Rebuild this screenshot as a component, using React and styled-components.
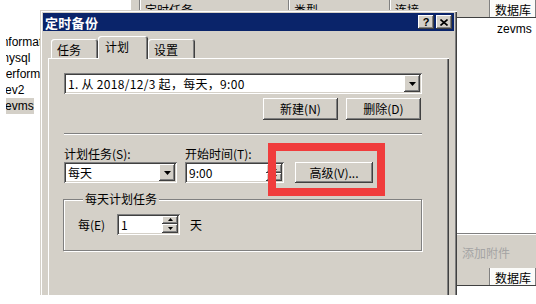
import styled, { createGlobalStyle } from 'styled-components';

const FACE = '#d4d0c8';
const SHADOW = '#808080';
const DARK = '#404040';

const raised = `
  background: ${FACE};
  box-shadow: inset -1px -1px ${DARK}, inset 1px 1px #fff, inset -2px -2px ${SHADOW}, inset 2px 2px ${FACE};
`;

const sunken = `
  background: #fff;
  box-shadow: inset 1px 1px ${SHADOW}, inset -1px -1px #fff, inset 2px 2px ${DARK}, inset -2px -2px ${FACE};
`;

const GlobalStyle = createGlobalStyle`
  * { box-sizing: border-box; }
  html, body { margin: 0; padding: 0; background: #fff; }
  body {
    overflow: hidden;
    font-family: "Noto Sans CJK SC", "Liberation Sans", sans-serif;
    font-size: 12px;
    color: #000;
  }
`;

const Screen = styled.div`
  position: relative;
  width: 536px;
  height: 304px;
  overflow: hidden;
  display: grid;
  grid-template-columns: 130px 1fr;
`;

/* ---------- background application ---------- */

const DbList = styled.ul`
  list-style: none;
  margin: 34px 0 0 6px;
  padding: 0;
  overflow: hidden;
  font: 12px "Liberation Sans", sans-serif;
`;

const DbItem = styled.li`
  height: 16px;
  line-height: 16px;
  white-space: nowrap;
  text-indent: -7px;
  background: ${p => (p.$selected ? `linear-gradient(${FACE}, ${FACE}) 0 0 / 28px 100% no-repeat` : 'none')};
`;

const MainArea = styled.div`
  display: flex;
  flex-direction: column;
  min-width: 0;
`;

const columns = '10px 149px 101px 100px 1fr';

const HeaderRow = styled.div`
  display: grid;
  grid-template-columns: ${columns};
  height: 18px;
  border-bottom: 1px solid ${DARK};
  border-top: ${p => (p.$boxed ? `1px solid ${DARK}` : 'none')};
`;

const HeaderCell = styled.div`
  background: ${p => (p.$light ? '#fbfbf9' : FACE)};
  border-right: 1px solid ${SHADOW};
  box-shadow: inset 1px 0 #fff;
  padding: 3px 0 0 5px;
  white-space: nowrap;
  overflow: hidden;
  line-height: 14px;
`;

const Grid = styled.div`
  flex: 0 0 215px;
  background: #fff;
`;

const DataRow = styled.div`
  display: grid;
  grid-template-columns: ${columns};
  margin-top: 4px;
  height: 16px;
  font: 12px "Liberation Sans", sans-serif;
`;

const DataCell = styled.div`
  padding-left: 7px;
  white-space: nowrap;
  overflow: hidden;
`;

const Toolbar = styled.div`
  flex: 0 0 35px;
  background: ${FACE};
  border-top: 1px solid ${SHADOW};
  box-shadow: inset 0 1px #fff;
  display: flex;
  align-items: center;
  justify-content: flex-end;
  padding: 2px 26px 0 0;
`;

const ToolItem = styled.span`
  color: #a4a4a4;
  font-size: 12px;
`;

/* ---------- dialog window ---------- */

const Dialog = styled.div`
  position: absolute;
  left: 40px;
  top: 10px;
  width: 417px;
  height: 285px;
  background: ${FACE};
  box-shadow: inset 1px 1px ${FACE}, inset 2px 2px #fff, inset -1px 0 ${DARK}, inset -2px 0 ${SHADOW};
  padding: 3px 3px 0;
  display: flex;
  flex-direction: column;
`;

const TitleBar = styled.div`
  height: 18px;
  background: #0a246a;
  display: flex;
  align-items: center;
  padding: 0 2px 0 2px;
`;

const Title = styled.span`
  flex: 1;
  color: #fff;
  font-weight: bold;
  font-size: 13px;
  letter-spacing: 0.3px;
`;

const CaptionButton = styled.span`
  ${raised}
  width: 16px;
  height: 14px;
  margin-left: 2px;
  display: flex;
  align-items: center;
  justify-content: center;
  font: bold 11px "Liberation Sans", sans-serif;
  line-height: 14px;
`;

const TabStrip = styled.div`
  display: flex;
  align-items: flex-end;
  height: 22px;
  margin-top: 5px;
  padding-left: 8px;
  position: relative;
  z-index: 1;
`;

const Tab = styled.div`
  width: ${p => p.$w}px;
  height: ${p => (p.$active ? 23 : 19)}px;
  margin-bottom: ${p => (p.$active ? -1 : 0)}px;
  background: ${FACE};
  border-radius: 3px 3px 0 0;
  box-shadow: inset 1px 1px #fff, inset -1px 0 ${DARK}, inset -2px 0 ${SHADOW};
  padding: ${p => (p.$active ? '4px 0 0 7px' : '4px 0 0 6px')};
  line-height: 14px;
`;

const TabPanel = styled.div`
  flex: 1;
  margin: 0 5px;
  background: ${FACE};
  box-shadow: inset 1px 1px #fff, inset -1px 0 ${DARK}, inset -2px 0 ${SHADOW};
  padding: 15px 0 0 16px;
`;

const Content = styled.div`
  width: 358px;
  display: flex;
  flex-direction: column;
`;

const Combo = styled.div`
  ${sunken}
  width: ${p => p.$w}px;
  height: 21px;
  display: flex;
  align-items: stretch;
  padding: 2px;
`;

const FieldText = styled.span`
  flex: 1;
  padding-left: 2px;
  line-height: 17px;
  white-space: nowrap;
  overflow: hidden;
  letter-spacing: ${p => p.$spacing || 0}px;
`;

const DropButton = styled.span`
  ${raised}
  width: 16px;
  display: flex;
  align-items: center;
  justify-content: center;
`;

const Spinner = styled.span`
  width: 16px;
  display: flex;
  flex-direction: column;
`;

const SpinHalf = styled.span`
  ${raised}
  flex: 1;
  display: flex;
  align-items: center;
  justify-content: center;
`;

const ButtonRow = styled.div`
  display: flex;
  justify-content: flex-end;
  gap: 8px;
  margin-top: 4px;
  padding-right: 1px;
`;

const PushButton = styled.span`
  ${raised}
  width: ${p => p.$w}px;
  height: 22px;
  display: flex;
  align-items: center;
  justify-content: center;
  white-space: nowrap;
  padding-bottom: 1px;
`;

const Separator = styled.div`
  height: 2px;
  margin-top: 13px;
  border-top: 1px solid ${SHADOW};
  border-bottom: 1px solid #fff;
`;

const ScheduleGrid = styled.div`
  display: grid;
  grid-template-columns: 113px 99px 78px;
  column-gap: 8px;
  row-gap: 1px;
  align-items: end;
  margin-top: 12px;
`;

const Label = styled.span`
  line-height: 14px;
  white-space: nowrap;
`;

const AdvancedButton = styled(PushButton)`
  height: 21px;
  margin-left: 3px;
`;

const GroupBox = styled.fieldset`
  margin: 9px 0 0 -1px;
  width: 359px;
  min-width: 0;
  padding: 0 0 16px 14px;
  border: 1px solid ${SHADOW};
  box-shadow: inset 1px 1px #fff, 1px 1px #fff;
`;

const GroupLegend = styled.legend`
  margin-left: 5px;
  padding: 0 2px;
  background: ${FACE};
  line-height: 14px;
`;

const GroupRow = styled.div`
  display: flex;
  align-items: center;
  height: 20px;
  margin-top: 8px;
`;

const RowLabel = styled.span`
  width: 39px;
  white-space: nowrap;
`;

const Unit = styled.span`
  margin-left: 10px;
`;

const Callout = styled.div`
  position: absolute;
  left: 268px;
  top: 143px;
  width: 117px;
  height: 53px;
  border: 8px solid #f03c3c;
`;

const Arrow = ({ up }) => (
  <svg width="7" height="4" viewBox="0 0 7 4">
    <path d={up ? 'M3.5 0L7 4H0z' : 'M0 0h7L3.5 4z'} fill="#000" />
  </svg>
);

const SmallArrow = ({ up }) => (
  <svg width="5" height="3" viewBox="0 0 5 3">
    <path d={up ? 'M2.5 0L5 3H0z' : 'M0 0h5L2.5 3z'} fill="#000" />
  </svg>
);

const dbNames = ['information_schema', 'mysql', 'performance_schema', 'zev2', 'zevms'];

export default function App() {
  return (
    <>
      <GlobalStyle />
      <Screen>
        <DbList>
          {dbNames.map(name => (
            <DbItem key={name} $selected={name === 'zevms'}>{name}</DbItem>
          ))}
        </DbList>

        <MainArea>
          <HeaderRow>
            <HeaderCell />
            <HeaderCell>定时任务</HeaderCell>
            <HeaderCell>类型</HeaderCell>
            <HeaderCell>连接</HeaderCell>
            <HeaderCell $light>数据库</HeaderCell>
          </HeaderRow>
          <Grid>
            <DataRow>
              <DataCell />
              <DataCell>备份</DataCell>
              <DataCell>备份</DataCell>
              <DataCell>zevms</DataCell>
              <DataCell>zevms</DataCell>
            </DataRow>
          </Grid>
          <Toolbar>
            <ToolItem>添加附件</ToolItem>
          </Toolbar>
          <HeaderRow>
            <HeaderCell />
            <HeaderCell>定时任务</HeaderCell>
            <HeaderCell>类型</HeaderCell>
            <HeaderCell>连接</HeaderCell>
            <HeaderCell $light>数据库</HeaderCell>
          </HeaderRow>
        </MainArea>

        <Dialog>
          <TitleBar>
            <Title>定时备份</Title>
            <CaptionButton>?</CaptionButton>
            <CaptionButton>
              <svg width="8" height="7" viewBox="0 0 8 7">
                <path d="M0.5 0.5L7.5 6.5M7.5 0.5L0.5 6.5" stroke="#000" strokeWidth="1.6" />
              </svg>
            </CaptionButton>
          </TitleBar>

          <TabStrip>
            <Tab $w={47}>任务</Tab>
            <Tab $w={50} $active>计划</Tab>
            <Tab $w={47}>设置</Tab>
          </TabStrip>

          <TabPanel>
            <Content>
              <Combo $w={358}>
                <FieldText $spacing={0.3}>1. 从 2018/12/3 起，每天，9:00</FieldText>
                <DropButton><Arrow /></DropButton>
              </Combo>

              <ButtonRow>
                <PushButton $w={75}>新建(N)</PushButton>
                <PushButton $w={75}>删除(D)</PushButton>
              </ButtonRow>

              <Separator />

              <ScheduleGrid>
                <Label>计划任务(S):</Label>
                <Label>开始时间(T):</Label>
                <span />
                <Combo $w={113}>
                  <FieldText>每天</FieldText>
                  <DropButton><Arrow /></DropButton>
                </Combo>
                <Combo $w={99}>
                  <FieldText>9:00</FieldText>
                  <Spinner>
                    <SpinHalf><SmallArrow up /></SpinHalf>
                    <SpinHalf><SmallArrow /></SpinHalf>
                  </Spinner>
                </Combo>
                <AdvancedButton $w={78}>高级(V)...</AdvancedButton>
              </ScheduleGrid>

              <GroupBox>
                <GroupLegend>每天计划任务</GroupLegend>
                <GroupRow>
                  <RowLabel>每(E)</RowLabel>
                  <Combo $w={63}>
                    <FieldText>1</FieldText>
                    <Spinner>
                      <SpinHalf><SmallArrow up /></SpinHalf>
                      <SpinHalf><SmallArrow /></SpinHalf>
                    </Spinner>
                  </Combo>
                  <Unit>天</Unit>
                </GroupRow>
              </GroupBox>
            </Content>
          </TabPanel>
        </Dialog>

        <Callout />
      </Screen>
    </>
  );
}
